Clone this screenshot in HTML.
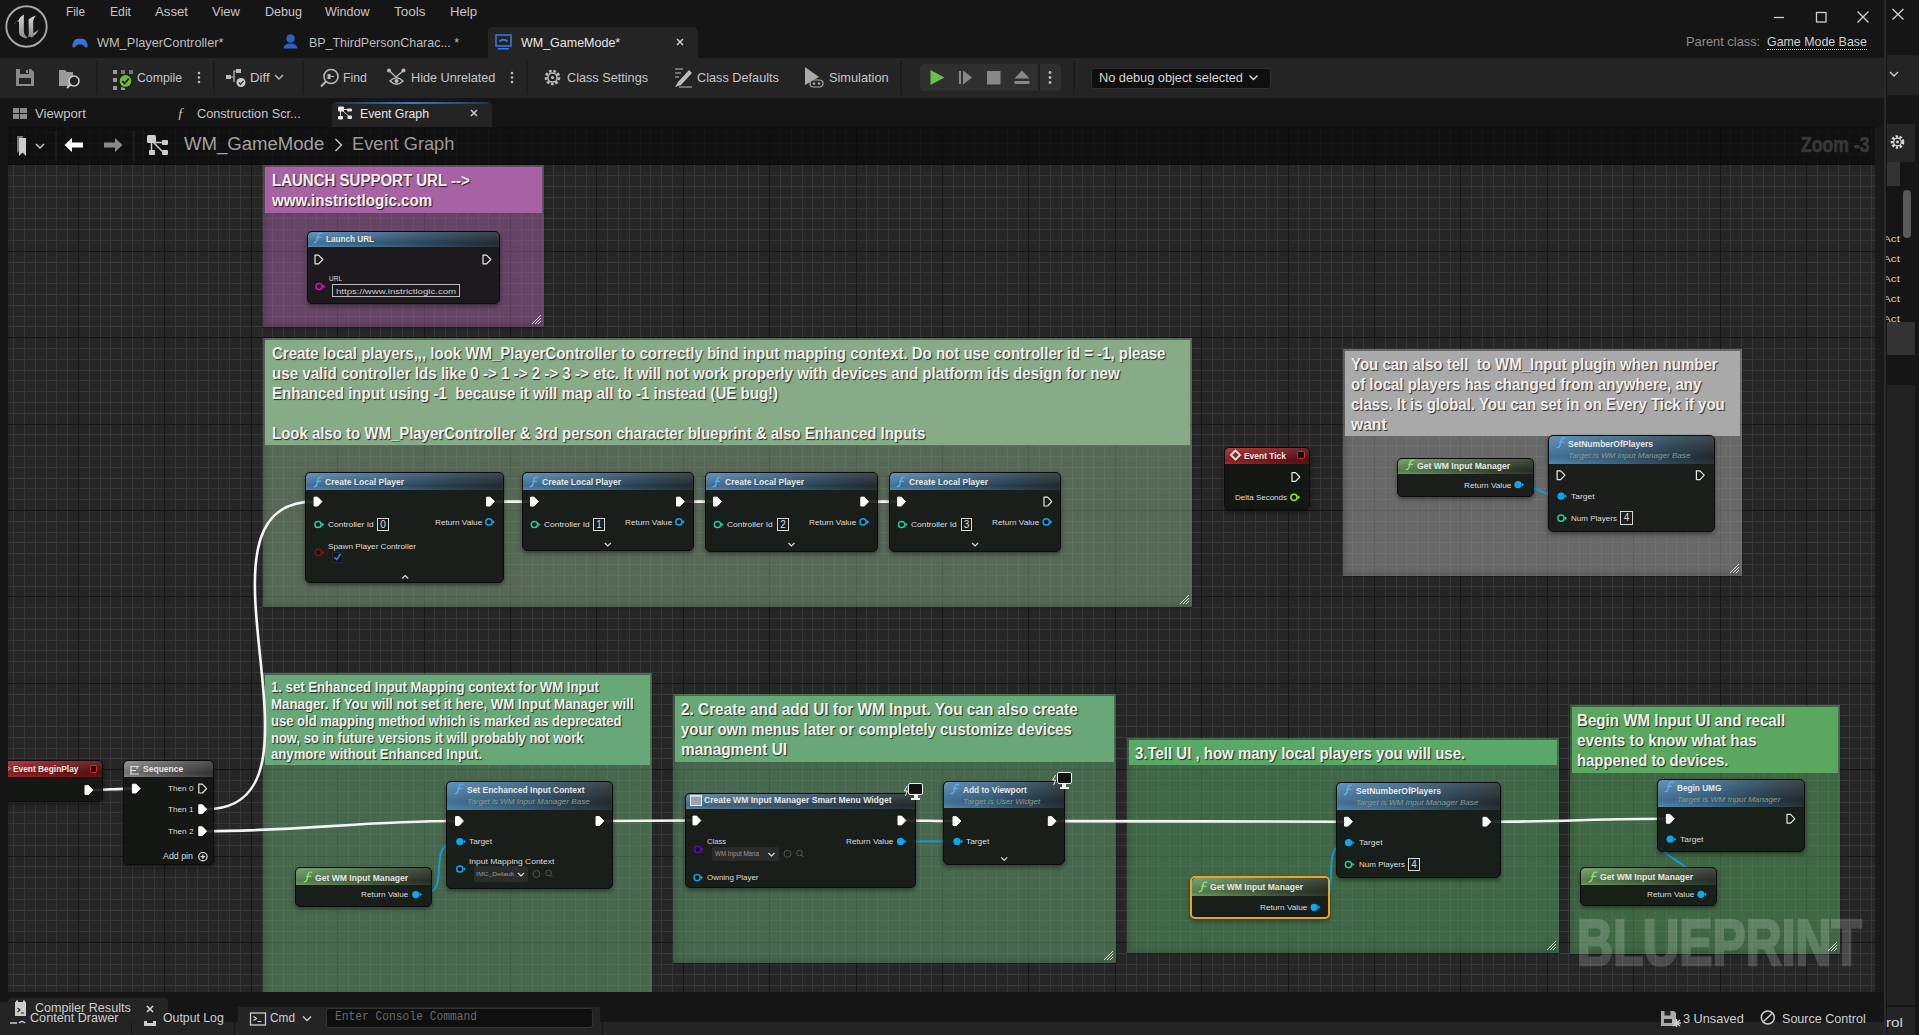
<!DOCTYPE html>
<html><head><meta charset="utf-8"><style>
*{box-sizing:border-box}
body{margin:0;width:1919px;height:1035px;overflow:hidden;background:#151515;font-family:"Liberation Sans",sans-serif;position:relative}
.a{position:absolute}
.t{white-space:pre;transform-origin:0 0}
.ct{text-shadow:1px 1px 1px rgba(0,0,0,.75)}
.cb{box-shadow:inset 5px -5px 6px -3px rgba(0,0,0,.16),0 1px 1px rgba(0,0,0,.35)}
.nd{border-radius:5px;background:rgba(20,22,20,.9);box-shadow:0 2px 4px rgba(0,0,0,.45);overflow:hidden}
.nh{border-radius:4px 4px 0 0}
.vb{border:1px solid #d8d8d8;color:#ddd;text-align:center;font-family:"Liberation Sans",sans-serif}
</style></head><body>
<div class="a" style="left:0;top:58px;width:1884px;height:40px;background:#242424"></div><svg class="a" style="left:0;top:0" width="56" height="56"><defs><linearGradient id="ug" x1="0" y1="0" x2="0" y2="1"><stop offset="0" stop-color="#d8d8d8"/><stop offset="1" stop-color="#8a8a8a"/></linearGradient></defs><circle cx="26.5" cy="26.5" r="20.2" fill="#151515" stroke="#a8a8a8" stroke-width="1.9"/><path d="M14 25Q15.5 20.5 18.5 21.5L19 22V33Q19.5 36.5 26 38.5L27.5 37.5Q24 35 23.8 31.5V18Q23.8 16 24 14.5Q20.5 16 18.6 20.2Q16.5 20.5 14 25Z" fill="url(#ug)"/><path d="M28.5 19.5Q32 16.5 36 15.5Q33.5 18 33.2 21V33Q36 31.5 39 29.5Q36 35 32 37.5L28.8 36.5L27.5 37.5Q29 35.5 28.8 33Z" fill="url(#ug)"/></svg><div class="a t " style="left:66.0px;top:3.70px;font-family:'Liberation Sans',sans-serif;font-size:13px;line-height:15.6px;font-weight:normal;font-style:normal;color:#c6c6c6;transform:scaleX(0.907);">File</div><div class="a t " style="left:110.3px;top:3.70px;font-family:'Liberation Sans',sans-serif;font-size:13px;line-height:15.6px;font-weight:normal;font-style:normal;color:#c6c6c6;transform:scaleX(0.937);">Edit</div><div class="a t " style="left:155.4px;top:3.70px;font-family:'Liberation Sans',sans-serif;font-size:13px;line-height:15.6px;font-weight:normal;font-style:normal;color:#c6c6c6;transform:scaleX(1.015);">Asset</div><div class="a t " style="left:212.0px;top:3.70px;font-family:'Liberation Sans',sans-serif;font-size:13px;line-height:15.6px;font-weight:normal;font-style:normal;color:#c6c6c6;transform:scaleX(1.002);">View</div><div class="a t " style="left:264.5px;top:3.70px;font-family:'Liberation Sans',sans-serif;font-size:13px;line-height:15.6px;font-weight:normal;font-style:normal;color:#c6c6c6;transform:scaleX(0.966);">Debug</div><div class="a t " style="left:325.0px;top:3.70px;font-family:'Liberation Sans',sans-serif;font-size:13px;line-height:15.6px;font-weight:normal;font-style:normal;color:#c6c6c6;transform:scaleX(0.962);">Window</div><div class="a t " style="left:394.0px;top:3.70px;font-family:'Liberation Sans',sans-serif;font-size:13px;line-height:15.6px;font-weight:normal;font-style:normal;color:#c6c6c6;transform:scaleX(1.038);">Tools</div><div class="a t " style="left:449.8px;top:3.70px;font-family:'Liberation Sans',sans-serif;font-size:13px;line-height:15.6px;font-weight:normal;font-style:normal;color:#c6c6c6;transform:scaleX(1.010);">Help</div><div class="a" style="left:488px;top:27px;width:209.5px;height:31px;background:#242424;border-radius:5px 5px 0 0"></div><div class="a t " style="left:97.2px;top:34.70px;font-family:'Liberation Sans',sans-serif;font-size:13px;line-height:15.6px;font-weight:normal;font-style:normal;color:#bdbdbd;transform:scaleX(0.984);">WM_PlayerController*</div><div class="a t " style="left:309.2px;top:34.70px;font-family:'Liberation Sans',sans-serif;font-size:13px;line-height:15.6px;font-weight:normal;font-style:normal;color:#bdbdbd;transform:scaleX(0.957);">BP_ThirdPersonCharac... *</div><div class="a t " style="left:521.0px;top:34.70px;font-family:'Liberation Sans',sans-serif;font-size:13px;line-height:15.6px;font-weight:normal;font-style:normal;color:#e8e8e8;transform:scaleX(0.960);">WM_GameMode*</div><svg class="a" style="left:0;top:0" width="720" height="58"><path d="M75 39.5Q80 37.5 85 39.5Q88 43 87.5 47Q86 48.5 84 46L82 44.5H78L76 46Q74 48.5 72.5 47Q72 43 75 39.5Z" fill="#3b6fd6"/><circle cx="290.5" cy="38.5" r="4.3" fill="#2f5fc8"/><path d="M283.5 48.5Q284 43.5 290.5 43.5Q297 43.5 297.5 48.5Z" fill="#2f5fc8"/><rect x="496" y="35" width="15" height="11" fill="none" stroke="#3b7be0" stroke-width="1.5"/><path d="M499.5 41.5Q503.5 38 507.5 41.5" stroke="#3b7be0" stroke-width="2" fill="none"/><rect x="498" y="48" width="11" height="1.5" fill="#3b7be0"/><path d="M677 39L683 45M683 39L677 45" stroke="#ccc" stroke-width="1.5"/></svg><svg class="a" style="left:1760px;top:0" width="159" height="58"><path d="M14 17.5H24" stroke="#ccc" stroke-width="1.3"/><rect x="56.5" y="12.5" width="9.5" height="9.5" fill="none" stroke="#ccc" stroke-width="1.3"/><path d="M97.5 11.5L108.5 22.5M108.5 11.5L97.5 22.5" stroke="#ccc" stroke-width="1.4"/><path d="M132.5 9L143.5 19.5M143.5 9L132.5 19.5" stroke="#ccc" stroke-width="1.4"/></svg><div class="a t " style="left:1686.3px;top:33.70px;font-family:'Liberation Sans',sans-serif;font-size:13px;line-height:15.6px;font-weight:normal;font-style:normal;color:#8e8e8e;transform:scaleX(0.987);">Parent class:</div><div class="a t " style="left:1767.3px;top:33.70px;font-family:'Liberation Sans',sans-serif;font-size:13px;line-height:15.6px;font-weight:normal;font-style:normal;color:#d0d0d0;transform:scaleX(0.953);">Game Mode Base</div><div class="a" style="left:1767px;top:49px;width:100px;height:0;border-top:1px dotted #ccc"></div><div class="a" style="left:96px;top:61px;width:2px;height:34px;background:#1b1b1b"></div><div class="a" style="left:212.5px;top:61px;width:2px;height:34px;background:#1b1b1b"></div><div class="a" style="left:301.5px;top:61px;width:2px;height:34px;background:#1b1b1b"></div><div class="a" style="left:525.5px;top:61px;width:2px;height:34px;background:#1b1b1b"></div><div class="a" style="left:900px;top:61px;width:2px;height:34px;background:#1b1b1b"></div><div class="a" style="left:1073px;top:61px;width:2px;height:34px;background:#1b1b1b"></div><div class="a t " style="left:137.3px;top:69.70px;font-family:'Liberation Sans',sans-serif;font-size:13px;line-height:15.6px;font-weight:normal;font-style:normal;color:#c4c4c4;transform:scaleX(0.944);">Compile</div><div class="a t " style="left:250.4px;top:69.70px;font-family:'Liberation Sans',sans-serif;font-size:13px;line-height:15.6px;font-weight:normal;font-style:normal;color:#c4c4c4;transform:scaleX(1.023);">Diff</div><div class="a t " style="left:343.3px;top:69.70px;font-family:'Liberation Sans',sans-serif;font-size:13px;line-height:15.6px;font-weight:normal;font-style:normal;color:#c4c4c4;transform:scaleX(0.945);">Find</div><div class="a t " style="left:411.4px;top:69.70px;font-family:'Liberation Sans',sans-serif;font-size:13px;line-height:15.6px;font-weight:normal;font-style:normal;color:#c4c4c4;transform:scaleX(0.973);">Hide Unrelated</div><div class="a t " style="left:567.3px;top:69.70px;font-family:'Liberation Sans',sans-serif;font-size:13px;line-height:15.6px;font-weight:normal;font-style:normal;color:#c4c4c4;transform:scaleX(0.975);">Class Settings</div><div class="a t " style="left:697.4px;top:69.70px;font-family:'Liberation Sans',sans-serif;font-size:13px;line-height:15.6px;font-weight:normal;font-style:normal;color:#c4c4c4;transform:scaleX(0.978);">Class Defaults</div><div class="a t " style="left:828.5px;top:69.70px;font-family:'Liberation Sans',sans-serif;font-size:13px;line-height:15.6px;font-weight:normal;font-style:normal;color:#c4c4c4;transform:scaleX(0.982);">Simulation</div><div class="a" style="left:920px;top:63.7px;width:141px;height:27.8px;background:#2f2f2f;border-radius:4px"></div><div class="a" style="left:1038px;top:63.7px;width:1.5px;height:27.8px;background:#1e1e1e"></div><div class="a" style="left:1091.4px;top:67.8px;width:179.2px;height:21px;background:#0f0f0f;border:1px solid #303030;border-radius:3px"></div><div class="a t " style="left:1098.8px;top:69.70px;font-family:'Liberation Sans',sans-serif;font-size:13px;line-height:15.6px;font-weight:normal;font-style:normal;color:#d4d4d4;transform:scaleX(0.981);">No debug object selected</div><svg class="a" style="left:0;top:58px" width="1919" height="40"><path d="M16 11H31L34 14V28H16Z" fill="#8a8a8a"/><rect x="19" y="20" width="12" height="6" fill="#242424"/><rect x="20" y="11" width="9" height="5" fill="#242424"/><rect x="26" y="12" width="2" height="3" fill="#8a8a8a"/><path d="M59 12H65L67 14H73V28H59Z" fill="#9a9a9a"/><circle cx="74" cy="23" r="5" fill="#242424" stroke="#ccc" stroke-width="1.6"/><path d="M70.5 26.5L67 30" stroke="#ccc" stroke-width="1.8"/><rect x="113" y="12" width="4" height="4" fill="#999"/><rect x="121" y="12" width="4" height="4" fill="#777"/><rect x="129" y="12" width="4" height="4" fill="#777"/><rect x="113" y="20" width="4" height="4" fill="#999"/><rect x="113" y="28" width="4" height="4" fill="#999"/><rect x="121" y="28" width="4" height="4" fill="#999"/><circle cx="125.5" cy="23" r="6.5" fill="#6cbf2a" stroke="#1a1a1a" stroke-width="1.2"/><path d="M122.3 23L124.7 25.5L128.8 20.5" fill="none" stroke="#111" stroke-width="1.8"/><circle cx="199" cy="15" r="1.3" fill="#bbb"/><circle cx="199" cy="19.5" r="1.3" fill="#bbb"/><circle cx="199" cy="24" r="1.3" fill="#bbb"/><rect x="226" y="17" width="5" height="4" fill="#bbb"/><rect x="236" y="11" width="5" height="4" fill="#bbb"/><path d="M231 19H234V13H236M234 19V24" stroke="#bbb" fill="none" stroke-width="1.2"/><circle cx="241" cy="24.5" r="4.5" fill="#ccc"/><path d="M238.8 24.5L240.5 26.3L243.5 22.8" stroke="#242424" fill="none" stroke-width="1.3"/><path d="M275 17L279 21L283 17" stroke="#bbb" fill="none" stroke-width="1.4"/><circle cx="331" cy="18.5" r="7" fill="none" stroke="#bbb" stroke-width="1.6"/><path d="M326 23.5L321 28.5" stroke="#bbb" stroke-width="2"/><rect x="327.5" y="16" width="3" height="5" fill="#bbb"/><path d="M330.5 18.5H334" stroke="#bbb"/><circle cx="389" cy="12.5" r="2" fill="#bbb"/><circle cx="403.5" cy="12.5" r="2" fill="#bbb"/><path d="M389 12.5L396 19M403.5 12.5L396 19" stroke="#bbb" stroke-width="1.2"/><path d="M390 23Q396.5 16.5 403 23Q396.5 29.5 390 23Z" fill="none" stroke="#bbb" stroke-width="1.4"/><circle cx="396.5" cy="23" r="2" fill="#bbb"/><circle cx="512" cy="15" r="1.3" fill="#bbb"/><circle cx="512" cy="19.5" r="1.3" fill="#bbb"/><circle cx="512" cy="24" r="1.3" fill="#bbb"/><circle cx="552.5" cy="19.5" r="6.5" fill="none" stroke="#bbb" stroke-width="2.6" stroke-dasharray="2.6 1.8"/><circle cx="552.5" cy="19.5" r="4.6" fill="none" stroke="#bbb" stroke-width="1.5"/><circle cx="552.5" cy="19.5" r="1.6" fill="#bbb"/><path d="M675 11H683M675 15H681M675 19H679M679 29H692M684 29H692" stroke="#bbb" stroke-width="1.2"/><path d="M675 29L678 24L689 12L692 15L681 27Z" fill="#bbb"/><path d="M805 9L819 19L805 27Z" fill="#aaa"/><rect x="810" y="22" width="13" height="7" rx="3.5" fill="#242424" stroke="#aaa" stroke-width="1.2"/><circle cx="814" cy="25.5" r="1.3" fill="#aaa"/><circle cx="819" cy="25.5" r="1.3" fill="#aaa"/><path d="M930.5 12L944.5 19.5L930.5 27Z" fill="#6cc04a"/><rect x="959" y="13" width="2" height="13" fill="#888"/><path d="M963 12.5L972 19.5L963 26.5Z" fill="#888"/><rect x="987" y="13" width="13.5" height="13.5" fill="#888"/><path d="M1014.5 20.5L1022 12.5L1029.5 20.5Z" fill="#888"/><rect x="1014.5" y="23" width="15" height="3" fill="#888"/><circle cx="1050" cy="14.5" r="1.4" fill="#bbb"/><circle cx="1050" cy="19.5" r="1.4" fill="#bbb"/><circle cx="1050" cy="24.5" r="1.4" fill="#bbb"/><path d="M1249.5 17.5L1253.5 21.5L1257.5 17.5" stroke="#ddd" fill="none" stroke-width="1.4"/></svg><div class="a" style="left:332.2px;top:102.3px;width:159.8px;height:24.7px;background:#242424;border-radius:4px 4px 0 0"></div><div class="a" style="left:336px;top:102.3px;width:152px;height:1.5px;background:linear-gradient(to right,rgba(40,120,220,.2),#2a7fd8,rgba(40,120,220,.2))"></div><div class="a t " style="left:35.2px;top:106.10px;font-family:'Liberation Sans',sans-serif;font-size:13px;line-height:15.6px;font-weight:normal;font-style:normal;color:#c4c4c4;transform:scaleX(1.009);">Viewport</div><div class="a t " style="left:197.2px;top:106.10px;font-family:'Liberation Sans',sans-serif;font-size:13px;line-height:15.6px;font-weight:normal;font-style:normal;color:#c4c4c4;transform:scaleX(0.976);">Construction Scr...</div><div class="a t " style="left:359.6px;top:106.10px;font-family:'Liberation Sans',sans-serif;font-size:13px;line-height:15.6px;font-weight:normal;font-style:normal;color:#e8e8e8;transform:scaleX(0.945);">Event Graph</div><div class="a" style="left:177px;top:104px;font:italic 15px/18px 'Liberation Serif',serif;color:#bbb">&#402;</div><svg class="a" style="left:0;top:98px" width="500" height="30"><rect x="13" y="10" width="6" height="5" fill="#8a8a8a"/><rect x="20" y="10" width="7" height="5" fill="#8a8a8a"/><rect x="13" y="16" width="6" height="5" fill="#8a8a8a"/><rect x="20" y="16" width="7" height="5" fill="#8a8a8a"/><rect x="338" y="8.5" width="6" height="5" rx="1" fill="#e8e8e8"/><rect x="347" y="10.5" width="5" height="3" rx="1" fill="#e8e8e8"/><rect x="338" y="18" width="5" height="3.5" rx="1" fill="#e8e8e8"/><rect x="347.5" y="17.5" width="4.5" height="3.5" rx="1" fill="#e8e8e8"/><path d="M344 11.5H347.5M340.5 13V18M342.5 12.5L348.5 18" stroke="#e8e8e8" stroke-width="0.9"/><path d="M471 12L477 18M477 12L471 18" stroke="#ccc" stroke-width="1.5"/></svg>
<svg id="grid" width="1919" height="1035" style="position:absolute;left:0;top:0"><rect x="8" y="127" width="1867" height="865" fill="#262626"/><path d="M13.5 127V992M24.5 127V992M35.5 127V992M46.5 127V992M56.5 127V992M67.5 127V992M89.5 127V992M100.5 127V992M110.5 127V992M121.5 127V992M132.5 127V992M143.5 127V992M154.5 127V992M175.5 127V992M186.5 127V992M197.5 127V992M208.5 127V992M218.5 127V992M229.5 127V992M240.5 127V992M262.5 127V992M272.5 127V992M283.5 127V992M294.5 127V992M305.5 127V992M316.5 127V992M326.5 127V992M348.5 127V992M359.5 127V992M370.5 127V992M380.5 127V992M391.5 127V992M402.5 127V992M413.5 127V992M434.5 127V992M445.5 127V992M456.5 127V992M467.5 127V992M478.5 127V992M488.5 127V992M499.5 127V992M521.5 127V992M532.5 127V992M542.5 127V992M553.5 127V992M564.5 127V992M575.5 127V992M586.5 127V992M607.5 127V992M618.5 127V992M629.5 127V992M640.5 127V992M650.5 127V992M661.5 127V992M672.5 127V992M694.5 127V992M704.5 127V992M715.5 127V992M726.5 127V992M737.5 127V992M748.5 127V992M758.5 127V992M780.5 127V992M791.5 127V992M802.5 127V992M812.5 127V992M823.5 127V992M834.5 127V992M845.5 127V992M866.5 127V992M877.5 127V992M888.5 127V992M899.5 127V992M910.5 127V992M920.5 127V992M931.5 127V992M953.5 127V992M964.5 127V992M974.5 127V992M985.5 127V992M996.5 127V992M1007.5 127V992M1018.5 127V992M1039.5 127V992M1050.5 127V992M1061.5 127V992M1072.5 127V992M1082.5 127V992M1093.5 127V992M1104.5 127V992M1126.5 127V992M1136.5 127V992M1147.5 127V992M1158.5 127V992M1169.5 127V992M1180.5 127V992M1190.5 127V992M1212.5 127V992M1223.5 127V992M1234.5 127V992M1244.5 127V992M1255.5 127V992M1266.5 127V992M1277.5 127V992M1298.5 127V992M1309.5 127V992M1320.5 127V992M1331.5 127V992M1342.5 127V992M1352.5 127V992M1363.5 127V992M1385.5 127V992M1396.5 127V992M1406.5 127V992M1417.5 127V992M1428.5 127V992M1439.5 127V992M1450.5 127V992M1471.5 127V992M1482.5 127V992M1493.5 127V992M1504.5 127V992M1514.5 127V992M1525.5 127V992M1536.5 127V992M1558.5 127V992M1568.5 127V992M1579.5 127V992M1590.5 127V992M1601.5 127V992M1612.5 127V992M1622.5 127V992M1644.5 127V992M1655.5 127V992M1666.5 127V992M1676.5 127V992M1687.5 127V992M1698.5 127V992M1709.5 127V992M1730.5 127V992M1741.5 127V992M1752.5 127V992M1763.5 127V992M1774.5 127V992M1784.5 127V992M1795.5 127V992M1817.5 127V992M1828.5 127V992M1838.5 127V992M1849.5 127V992M1860.5 127V992M1871.5 127V992M8 132.5H1875M8 143.5H1875M8 154.5H1875M8 175.5H1875M8 186.5H1875M8 197.5H1875M8 208.5H1875M8 218.5H1875M8 229.5H1875M8 240.5H1875M8 262.5H1875M8 272.5H1875M8 283.5H1875M8 294.5H1875M8 305.5H1875M8 316.5H1875M8 326.5H1875M8 348.5H1875M8 359.5H1875M8 370.5H1875M8 380.5H1875M8 391.5H1875M8 402.5H1875M8 413.5H1875M8 434.5H1875M8 445.5H1875M8 456.5H1875M8 467.5H1875M8 478.5H1875M8 488.5H1875M8 499.5H1875M8 521.5H1875M8 532.5H1875M8 542.5H1875M8 553.5H1875M8 564.5H1875M8 575.5H1875M8 586.5H1875M8 607.5H1875M8 618.5H1875M8 629.5H1875M8 640.5H1875M8 650.5H1875M8 661.5H1875M8 672.5H1875M8 694.5H1875M8 704.5H1875M8 715.5H1875M8 726.5H1875M8 737.5H1875M8 748.5H1875M8 758.5H1875M8 780.5H1875M8 791.5H1875M8 802.5H1875M8 812.5H1875M8 823.5H1875M8 834.5H1875M8 845.5H1875M8 866.5H1875M8 877.5H1875M8 888.5H1875M8 899.5H1875M8 910.5H1875M8 920.5H1875M8 931.5H1875M8 953.5H1875M8 964.5H1875M8 974.5H1875M8 985.5H1875" stroke="#373737" stroke-width="1"/><path d="M78.5 127V992M164.5 127V992M251.5 127V992M337.5 127V992M424.5 127V992M510.5 127V992M596.5 127V992M683.5 127V992M769.5 127V992M856.5 127V992M942.5 127V992M1028.5 127V992M1115.5 127V992M1201.5 127V992M1288.5 127V992M1374.5 127V992M1460.5 127V992M1547.5 127V992M1633.5 127V992M1720.5 127V992M1806.5 127V992M8 164.5H1875M8 251.5H1875M8 337.5H1875M8 424.5H1875M8 510.5H1875M8 596.5H1875M8 683.5H1875M8 769.5H1875M8 856.5H1875M8 942.5H1875" stroke="#171717" stroke-width="1"/></svg>
<div class="a" style="left:8px;top:127px;width:1867px;height:865px;overflow:hidden">
<div class="a" style="left:-8px;top:-127px;width:1919px;height:1035px">
<div class="a cb" style="left:263px;top:164.5px;width:281px;height:162.5px;background:rgba(166,98,163,0.5)"></div><div class="a" style="left:265px;top:166.5px;width:277px;height:46.5px;background:#a662a3"></div><svg class="a" style="left:530px;top:313px" width="12" height="12"><path d="M11 2L2 11M11 5L5 11M11 8L8 11" stroke="#ddd" stroke-width="1"/></svg><div class="a cb" style="left:263px;top:338px;width:929px;height:269px;background:rgba(136,170,136,0.5)"></div><div class="a" style="left:265px;top:340px;width:925px;height:105px;background:#87ab87"></div><svg class="a" style="left:1178px;top:593px" width="12" height="12"><path d="M11 2L2 11M11 5L5 11M11 8L8 11" stroke="#ddd" stroke-width="1"/></svg><div class="a cb" style="left:1343px;top:349px;width:399px;height:227px;background:rgba(169,169,169,0.5)"></div><div class="a" style="left:1345px;top:351px;width:395px;height:85px;background:#a9a9a9"></div><svg class="a" style="left:1728px;top:562px" width="12" height="12"><path d="M11 2L2 11M11 5L5 11M11 8L8 11" stroke="#ddd" stroke-width="1"/></svg><div class="a cb" style="left:263px;top:673px;width:389px;height:339px;background:rgba(104,168,120,0.5)"></div><div class="a" style="left:265px;top:675px;width:385px;height:90px;background:#68a878"></div><svg class="a" style="left:638px;top:998px" width="12" height="12"><path d="M11 2L2 11M11 5L5 11M11 8L8 11" stroke="#ddd" stroke-width="1"/></svg><div class="a cb" style="left:673px;top:694px;width:443px;height:269px;background:rgba(104,168,120,0.5)"></div><div class="a" style="left:675px;top:696px;width:439px;height:66px;background:#68a878"></div><svg class="a" style="left:1102px;top:949px" width="12" height="12"><path d="M11 2L2 11M11 5L5 11M11 8L8 11" stroke="#ddd" stroke-width="1"/></svg><div class="a cb" style="left:1127px;top:738px;width:432px;height:215px;background:rgba(90,168,104,0.5)"></div><div class="a" style="left:1129px;top:740px;width:428px;height:25px;background:#5aa868"></div><svg class="a" style="left:1545px;top:939px" width="12" height="12"><path d="M11 2L2 11M11 5L5 11M11 8L8 11" stroke="#ddd" stroke-width="1"/></svg><div class="a cb" style="left:1570px;top:705px;width:270px;height:249px;background:rgba(90,168,96,0.5)"></div><div class="a" style="left:1572px;top:707px;width:266px;height:66px;background:#5aa860"></div><svg class="a" style="left:1826px;top:940px" width="12" height="12"><path d="M11 2L2 11M11 5L5 11M11 8L8 11" stroke="#ddd" stroke-width="1"/></svg><div class="a t ct" style="left:271.6px;top:170.86px;font-family:'Liberation Sans',sans-serif;font-size:16px;line-height:19.2px;font-weight:bold;font-style:normal;color:#f0f0f0;transform:scaleX(0.938);">LAUNCH SUPPORT URL --&gt;</div><div class="a t ct" style="left:271.6px;top:190.56px;font-family:'Liberation Sans',sans-serif;font-size:16px;line-height:19.2px;font-weight:bold;font-style:normal;color:#f0f0f0;transform:scaleX(0.947);">www.instrictlogic.com</div><div class="a t ct" style="left:271.8px;top:343.86px;font-family:'Liberation Sans',sans-serif;font-size:16px;line-height:19.2px;font-weight:bold;font-style:normal;color:#f0f0f0;transform:scaleX(0.937);">Create local players,,, look WM_PlayerController to correctly bind input mapping context. Do not use controller id = -1, please</div><div class="a t ct" style="left:271.8px;top:363.86px;font-family:'Liberation Sans',sans-serif;font-size:16px;line-height:19.2px;font-weight:bold;font-style:normal;color:#f0f0f0;transform:scaleX(0.945);">use valid controller Ids like 0 -&gt; 1 -&gt; 2 -&gt; 3 -&gt; etc. It will not work properly with devices and platform ids design for new</div><div class="a t ct" style="left:271.8px;top:383.86px;font-family:'Liberation Sans',sans-serif;font-size:16px;line-height:19.2px;font-weight:bold;font-style:normal;color:#f0f0f0;transform:scaleX(0.941);">Enhanced input using -1  because it will map all to -1 instead (UE bug!)</div><div class="a t ct" style="left:271.8px;top:423.86px;font-family:'Liberation Sans',sans-serif;font-size:16px;line-height:19.2px;font-weight:bold;font-style:normal;color:#f0f0f0;transform:scaleX(0.935);">Look also to WM_PlayerController &amp; 3rd person character blueprint &amp; also Enhanced Inputs</div><div class="a t ct" style="left:1351.3px;top:354.86px;font-family:'Liberation Sans',sans-serif;font-size:16px;line-height:19.2px;font-weight:bold;font-style:normal;color:#f0f0f0;transform:scaleX(0.938);">You can also tell  to WM_Input plugin when number</div><div class="a t ct" style="left:1351.3px;top:374.86px;font-family:'Liberation Sans',sans-serif;font-size:16px;line-height:19.2px;font-weight:bold;font-style:normal;color:#f0f0f0;transform:scaleX(0.938);">of local players has changed from anywhere, any</div><div class="a t ct" style="left:1351.3px;top:394.86px;font-family:'Liberation Sans',sans-serif;font-size:16px;line-height:19.2px;font-weight:bold;font-style:normal;color:#f0f0f0;transform:scaleX(0.936);">class. It is global. You can set in on Every Tick if you</div><div class="a t ct" style="left:1351.3px;top:414.86px;font-family:'Liberation Sans',sans-serif;font-size:16px;line-height:19.2px;font-weight:bold;font-style:normal;color:#f0f0f0;transform:scaleX(0.977);">want</div><div class="a t ct" style="left:271.3px;top:678.75px;font-family:'Liberation Sans',sans-serif;font-size:14px;line-height:16.8px;font-weight:bold;font-style:normal;color:#f0f0f0;transform:scaleX(0.939);">1. set Enhanced Input Mapping context for WM Input</div><div class="a t ct" style="left:271.3px;top:695.75px;font-family:'Liberation Sans',sans-serif;font-size:14px;line-height:16.8px;font-weight:bold;font-style:normal;color:#f0f0f0;transform:scaleX(0.947);">Manager. If You will not set it here, WM Input Manager will</div><div class="a t ct" style="left:271.3px;top:712.75px;font-family:'Liberation Sans',sans-serif;font-size:14px;line-height:16.8px;font-weight:bold;font-style:normal;color:#f0f0f0;transform:scaleX(0.931);">use old mapping method which is marked as deprecated</div><div class="a t ct" style="left:271.3px;top:729.75px;font-family:'Liberation Sans',sans-serif;font-size:14px;line-height:16.8px;font-weight:bold;font-style:normal;color:#f0f0f0;transform:scaleX(0.927);">now, so in future versions it will probably not work</div><div class="a t ct" style="left:271.3px;top:745.75px;font-family:'Liberation Sans',sans-serif;font-size:14px;line-height:16.8px;font-weight:bold;font-style:normal;color:#f0f0f0;transform:scaleX(0.939);">anymore without Enhanced Input.</div><div class="a t ct" style="left:681.3px;top:700.26px;font-family:'Liberation Sans',sans-serif;font-size:16px;line-height:19.2px;font-weight:bold;font-style:normal;color:#f0f0f0;transform:scaleX(0.959);">2. Create and add UI for WM Input. You can also create</div><div class="a t ct" style="left:681.3px;top:719.86px;font-family:'Liberation Sans',sans-serif;font-size:16px;line-height:19.2px;font-weight:bold;font-style:normal;color:#f0f0f0;transform:scaleX(0.931);">your own menus later or completely customize devices</div><div class="a t ct" style="left:681.3px;top:739.66px;font-family:'Liberation Sans',sans-serif;font-size:16px;line-height:19.2px;font-weight:bold;font-style:normal;color:#f0f0f0;transform:scaleX(0.962);">managment UI</div><div class="a t ct" style="left:1135.3px;top:743.56px;font-family:'Liberation Sans',sans-serif;font-size:16px;line-height:19.2px;font-weight:bold;font-style:normal;color:#f0f0f0;transform:scaleX(0.936);">3.Tell UI , how many local players you will use.</div><div class="a t ct" style="left:1577.3px;top:710.86px;font-family:'Liberation Sans',sans-serif;font-size:16px;line-height:19.2px;font-weight:bold;font-style:normal;color:#f0f0f0;transform:scaleX(0.944);">Begin WM Input UI and recall</div><div class="a t ct" style="left:1577.3px;top:730.86px;font-family:'Liberation Sans',sans-serif;font-size:16px;line-height:19.2px;font-weight:bold;font-style:normal;color:#f0f0f0;transform:scaleX(0.953);">events to know what has</div><div class="a t ct" style="left:1577.3px;top:750.66px;font-family:'Liberation Sans',sans-serif;font-size:16px;line-height:19.2px;font-weight:bold;font-style:normal;color:#f0f0f0;transform:scaleX(0.930);">happened to devices.</div><svg class="a" style="left:0;top:0" width="1919" height="1035"><path d="M92.0 790.0C107.0 790.0 117.0 788.6 132.0 788.6M206.0 809.2C346.0 809.2 174.0 501.6 314.0 501.6M206.0 831.2C296.0 831.2 366.0 821.0 456.0 821.0M496.0 501.6C506.0 501.6 520.0 501.6 530.0 501.6M685.0 501.6C695.0 501.6 703.6 501.6 713.6 501.6M869.0 501.6C879.0 501.6 887.7 501.6 897.7 501.6M604.0 821.0C634.0 821.0 663.0 820.5 693.0 820.5M906.0 820.5C921.0 820.5 938.0 821.1 953.0 821.1M1056.0 821.1C1156.0 821.1 1245.0 821.7 1345.0 821.7M1493.0 821.7C1553.0 821.7 1606.4 818.8 1666.4 818.8" fill="none" stroke="#f4f4f4" stroke-width="2.6"/><path d="M418.0 895.6C458.0 895.6 420.0 841.6 460.0 841.6M1518.0 484.7C1538.0 484.7 1541.0 496.2 1561.0 496.2M900.5 841.4C910.5 841.4 947.0 841.4 957.0 841.4M1313.2 906.4C1348.2 906.4 1313.8 842.7 1348.8 842.7M1702.3 895.2C1757.3 895.2 1615.2 839.2 1670.2 839.2" fill="none" stroke="#0aa0e8" stroke-width="1.8"/></svg><div class="a nd" style="left:306.6px;top:230.5px;width:193.1px;height:73.8px;border:1px solid #0c0c0c;"><div class="a nh" style="left:0;top:0;right:0;height:15.3px;background:linear-gradient(to bottom,rgba(255,255,255,.10),rgba(0,0,0,.18) 75%,rgba(0,0,0,0)),linear-gradient(to right,#5288b3 0%,#3f6d90 35%,#2c4658 75%,#2a3238 100%)"></div></div><svg class="a" style="left:312.5px;top:231.0px" width="12" height="14"><path d="M1.2 11.6Q3.6 12 4.3 8L5.2 4Q5.9 1.6 8.8 2.4M3.6 6.3H7.6" fill="none" stroke="#5cb0f0" stroke-width="1.3" stroke-linecap="round"/></svg><div class="a t " style="left:326.3px;top:233.01px;font-family:'Liberation Sans',sans-serif;font-size:9.5px;line-height:11.4px;font-weight:bold;font-style:normal;color:#e6e6e6;transform:scaleX(0.860);">Launch URL</div><div class="a t " style="left:329.0px;top:275.37px;font-family:'Liberation Sans',sans-serif;font-size:7px;line-height:8.4px;font-weight:normal;font-style:normal;color:#dcdcdc;transform:scaleX(0.928);">URL</div><div class="a" style="left:332px;top:284px;width:128px;height:13px;border:1px solid #bbb"></div><div class="a t " style="left:336.0px;top:286.93px;font-family:'Liberation Sans',sans-serif;font-size:8px;line-height:9.6px;font-weight:normal;font-style:normal;color:#d0d0d0;transform:scaleX(1.200);">https://www.instrictlogic.com</div><div class="a nd" style="left:305.1px;top:472.3px;width:198.5px;height:111.1px;border:1px solid #0c0c0c;"><div class="a nh" style="left:0;top:0;right:0;height:16.4px;background:linear-gradient(to bottom,rgba(255,255,255,.10),rgba(0,0,0,.18) 75%,rgba(0,0,0,0)),linear-gradient(to right,#5288b3 0%,#3f6d90 35%,#2c4658 75%,#2a3238 100%)"></div></div><svg class="a" style="left:312.6px;top:474.5px" width="12" height="14"><path d="M1.2 11.6Q3.6 12 4.3 8L5.2 4Q5.9 1.6 8.8 2.4M3.6 6.3H7.6" fill="none" stroke="#5cb0f0" stroke-width="1.3" stroke-linecap="round"/></svg><div class="a t " style="left:325.1px;top:476.01px;font-family:'Liberation Sans',sans-serif;font-size:9.5px;line-height:11.4px;font-weight:bold;font-style:normal;color:#e6e6e6;transform:scaleX(0.896);">Create Local Player</div><div class="a t " style="left:327.7px;top:519.90px;font-family:'Liberation Sans',sans-serif;font-size:7.5px;line-height:9.0px;font-weight:normal;font-style:normal;color:#dcdcdc;transform:scaleX(1.119);">Controller Id</div><div class="a vb" style="left:377.1px;top:518.1px;width:11.9px;height:12.5px;font-size:10px;line-height:11.0px">0</div><div class="a t " style="left:434.6px;top:518.30px;font-family:'Liberation Sans',sans-serif;font-size:7.5px;line-height:9.0px;font-weight:normal;font-style:normal;color:#dcdcdc;transform:scaleX(1.092);">Return Value</div><div class="a t " style="left:328.0px;top:541.90px;font-family:'Liberation Sans',sans-serif;font-size:7.5px;line-height:9.0px;font-weight:normal;font-style:normal;color:#dcdcdc;transform:scaleX(1.088);">Spawn Player Controller</div><div class="a" style="left:331.6px;top:551.7px;width:11px;height:11px;background:#141414;border:1px solid #2a2a2a"></div><div class="a nd" style="left:521.5px;top:472.3px;width:172.0px;height:79.0px;border:1px solid #0c0c0c;"><div class="a nh" style="left:0;top:0;right:0;height:16.4px;background:linear-gradient(to bottom,rgba(255,255,255,.10),rgba(0,0,0,.18) 75%,rgba(0,0,0,0)),linear-gradient(to right,#5288b3 0%,#3f6d90 35%,#2c4658 75%,#2a3238 100%)"></div></div><svg class="a" style="left:529.0px;top:474.5px" width="12" height="14"><path d="M1.2 11.6Q3.6 12 4.3 8L5.2 4Q5.9 1.6 8.8 2.4M3.6 6.3H7.6" fill="none" stroke="#5cb0f0" stroke-width="1.3" stroke-linecap="round"/></svg><div class="a t " style="left:541.5px;top:476.01px;font-family:'Liberation Sans',sans-serif;font-size:9.5px;line-height:11.4px;font-weight:bold;font-style:normal;color:#e6e6e6;transform:scaleX(0.896);">Create Local Player</div><div class="a t " style="left:544.1px;top:519.90px;font-family:'Liberation Sans',sans-serif;font-size:7.5px;line-height:9.0px;font-weight:normal;font-style:normal;color:#dcdcdc;transform:scaleX(1.119);">Controller Id</div><div class="a vb" style="left:593.3px;top:518.1px;width:11.4px;height:12.5px;font-size:10px;line-height:11.0px">1</div><div class="a t " style="left:624.5px;top:518.30px;font-family:'Liberation Sans',sans-serif;font-size:7.5px;line-height:9.0px;font-weight:normal;font-style:normal;color:#dcdcdc;transform:scaleX(1.092);">Return Value</div><div class="a nd" style="left:704.6px;top:472.3px;width:173.2px;height:79.5px;border:1px solid #0c0c0c;"><div class="a nh" style="left:0;top:0;right:0;height:16.4px;background:linear-gradient(to bottom,rgba(255,255,255,.10),rgba(0,0,0,.18) 75%,rgba(0,0,0,0)),linear-gradient(to right,#5288b3 0%,#3f6d90 35%,#2c4658 75%,#2a3238 100%)"></div></div><svg class="a" style="left:712.1px;top:474.5px" width="12" height="14"><path d="M1.2 11.6Q3.6 12 4.3 8L5.2 4Q5.9 1.6 8.8 2.4M3.6 6.3H7.6" fill="none" stroke="#5cb0f0" stroke-width="1.3" stroke-linecap="round"/></svg><div class="a t " style="left:724.6px;top:476.01px;font-family:'Liberation Sans',sans-serif;font-size:9.5px;line-height:11.4px;font-weight:bold;font-style:normal;color:#e6e6e6;transform:scaleX(0.896);">Create Local Player</div><div class="a t " style="left:727.2px;top:519.90px;font-family:'Liberation Sans',sans-serif;font-size:7.5px;line-height:9.0px;font-weight:normal;font-style:normal;color:#dcdcdc;transform:scaleX(1.119);">Controller Id</div><div class="a vb" style="left:777.2px;top:518.1px;width:11.8px;height:12.5px;font-size:10px;line-height:11.0px">2</div><div class="a t " style="left:808.8px;top:518.30px;font-family:'Liberation Sans',sans-serif;font-size:7.5px;line-height:9.0px;font-weight:normal;font-style:normal;color:#dcdcdc;transform:scaleX(1.092);">Return Value</div><div class="a nd" style="left:888.7px;top:472.3px;width:172.3px;height:79.5px;border:1px solid #0c0c0c;"><div class="a nh" style="left:0;top:0;right:0;height:16.4px;background:linear-gradient(to bottom,rgba(255,255,255,.10),rgba(0,0,0,.18) 75%,rgba(0,0,0,0)),linear-gradient(to right,#5288b3 0%,#3f6d90 35%,#2c4658 75%,#2a3238 100%)"></div></div><svg class="a" style="left:896.2px;top:474.5px" width="12" height="14"><path d="M1.2 11.6Q3.6 12 4.3 8L5.2 4Q5.9 1.6 8.8 2.4M3.6 6.3H7.6" fill="none" stroke="#5cb0f0" stroke-width="1.3" stroke-linecap="round"/></svg><div class="a t " style="left:908.7px;top:476.01px;font-family:'Liberation Sans',sans-serif;font-size:9.5px;line-height:11.4px;font-weight:bold;font-style:normal;color:#e6e6e6;transform:scaleX(0.896);">Create Local Player</div><div class="a t " style="left:911.3px;top:519.90px;font-family:'Liberation Sans',sans-serif;font-size:7.5px;line-height:9.0px;font-weight:normal;font-style:normal;color:#dcdcdc;transform:scaleX(1.119);">Controller Id</div><div class="a vb" style="left:960.5px;top:518.1px;width:11.9px;height:12.5px;font-size:10px;line-height:11.0px">3</div><div class="a t " style="left:992.0px;top:518.30px;font-family:'Liberation Sans',sans-serif;font-size:7.5px;line-height:9.0px;font-weight:normal;font-style:normal;color:#dcdcdc;transform:scaleX(1.092);">Return Value</div><div class="a nd" style="left:1224.3px;top:446.9px;width:85.4px;height:62.7px;border:1px solid #0c0c0c;"><div class="a nh" style="left:0;top:0;right:0;height:16.3px;background:linear-gradient(to bottom,rgba(255,255,255,.10),rgba(0,0,0,.18) 75%,rgba(0,0,0,0)),linear-gradient(to right,#a82828 0%,#8a1c1c 45%,#5a1414 100%)"></div></div><div class="a t " style="left:1243.8px;top:449.91px;font-family:'Liberation Sans',sans-serif;font-size:9.5px;line-height:11.4px;font-weight:bold;font-style:normal;color:#e6e6e6;transform:scaleX(0.887);">Event Tick</div><div class="a" style="left:1297.2px;top:451.3px;width:8px;height:8px;background:#111;border:1.6px solid #f02020;border-radius:1.5px"></div><div class="a t " style="left:1234.9px;top:492.50px;font-family:'Liberation Sans',sans-serif;font-size:7.5px;line-height:9.0px;font-weight:normal;font-style:normal;color:#dcdcdc;transform:scaleX(1.066);">Delta Seconds</div><div class="a nd" style="left:1397.1px;top:457.5px;width:136.7px;height:39.2px;border:1px solid #0c0c0c;"><div class="a nh" style="left:0;top:0;right:0;height:15.2px;background:linear-gradient(to bottom,rgba(255,255,255,.10),rgba(0,0,0,.18) 75%,rgba(0,0,0,0)),linear-gradient(to right,#6c9a62 0%,#557a4c 35%,#3a4c35 75%,#2f362c 100%)"></div></div><svg class="a" style="left:1404.7px;top:458.2px" width="12" height="14"><path d="M1.2 11.6Q3.6 12 4.3 8L5.2 4Q5.9 1.6 8.8 2.4M3.6 6.3H7.6" fill="none" stroke="#8fe07a" stroke-width="1.3" stroke-linecap="round"/></svg><div class="a t " style="left:1416.9px;top:460.01px;font-family:'Liberation Sans',sans-serif;font-size:9.5px;line-height:11.4px;font-weight:bold;font-style:normal;color:#e6e6e6;transform:scaleX(0.904);">Get WM Input Manager</div><div class="a t " style="left:1463.6px;top:480.50px;font-family:'Liberation Sans',sans-serif;font-size:7.5px;line-height:9.0px;font-weight:normal;font-style:normal;color:#dcdcdc;transform:scaleX(1.094);">Return Value</div><div class="a nd" style="left:295.0px;top:867.4px;width:136.6px;height:39.2px;border:1px solid #0c0c0c;"><div class="a nh" style="left:0;top:0;right:0;height:16.8px;background:linear-gradient(to bottom,rgba(255,255,255,.10),rgba(0,0,0,.18) 75%,rgba(0,0,0,0)),linear-gradient(to right,#6c9a62 0%,#557a4c 35%,#3a4c35 75%,#2f362c 100%)"></div></div><svg class="a" style="left:302.6px;top:869.7px" width="12" height="14"><path d="M1.2 11.6Q3.6 12 4.3 8L5.2 4Q5.9 1.6 8.8 2.4M3.6 6.3H7.6" fill="none" stroke="#8fe07a" stroke-width="1.3" stroke-linecap="round"/></svg><div class="a t " style="left:314.8px;top:871.51px;font-family:'Liberation Sans',sans-serif;font-size:9.5px;line-height:11.4px;font-weight:bold;font-style:normal;color:#e6e6e6;transform:scaleX(0.904);">Get WM Input Manager</div><div class="a t " style="left:361.4px;top:890.40px;font-family:'Liberation Sans',sans-serif;font-size:7.5px;line-height:9.0px;font-weight:normal;font-style:normal;color:#dcdcdc;transform:scaleX(1.094);">Return Value</div><div class="a nd" style="left:1190.4px;top:876.4px;width:139.6px;height:42.9px;border:2px solid #f2a020;"><div class="a nh" style="left:0;top:0;right:0;height:17.6px;background:linear-gradient(to bottom,rgba(255,255,255,.10),rgba(0,0,0,.18) 75%,rgba(0,0,0,0)),linear-gradient(to right,#6c9a62 0%,#557a4c 35%,#3a4c35 75%,#2f362c 100%)"></div></div><svg class="a" style="left:1198.0px;top:879.5px" width="12" height="14"><path d="M1.2 11.6Q3.6 12 4.3 8L5.2 4Q5.9 1.6 8.8 2.4M3.6 6.3H7.6" fill="none" stroke="#8fe07a" stroke-width="1.3" stroke-linecap="round"/></svg><div class="a t " style="left:1210.2px;top:881.31px;font-family:'Liberation Sans',sans-serif;font-size:9.5px;line-height:11.4px;font-weight:bold;font-style:normal;color:#e6e6e6;transform:scaleX(0.904);">Get WM Input Manager</div><div class="a t " style="left:1259.8px;top:903.10px;font-family:'Liberation Sans',sans-serif;font-size:7.5px;line-height:9.0px;font-weight:normal;font-style:normal;color:#dcdcdc;transform:scaleX(1.094);">Return Value</div><div class="a nd" style="left:1580.4px;top:867.4px;width:136.3px;height:38.9px;border:1px solid #0c0c0c;"><div class="a nh" style="left:0;top:0;right:0;height:16.7px;background:linear-gradient(to bottom,rgba(255,255,255,.10),rgba(0,0,0,.18) 75%,rgba(0,0,0,0)),linear-gradient(to right,#6c9a62 0%,#557a4c 35%,#3a4c35 75%,#2f362c 100%)"></div></div><svg class="a" style="left:1588.0px;top:869.6px" width="12" height="14"><path d="M1.2 11.6Q3.6 12 4.3 8L5.2 4Q5.9 1.6 8.8 2.4M3.6 6.3H7.6" fill="none" stroke="#8fe07a" stroke-width="1.3" stroke-linecap="round"/></svg><div class="a t " style="left:1600.2px;top:871.41px;font-family:'Liberation Sans',sans-serif;font-size:9.5px;line-height:11.4px;font-weight:bold;font-style:normal;color:#e6e6e6;transform:scaleX(0.904);">Get WM Input Manager</div><div class="a t " style="left:1646.5px;top:890.10px;font-family:'Liberation Sans',sans-serif;font-size:7.5px;line-height:9.0px;font-weight:normal;font-style:normal;color:#dcdcdc;transform:scaleX(1.094);">Return Value</div><div class="a nd" style="left:1548.1px;top:435.4px;width:166.8px;height:97.1px;border:1px solid #0c0c0c;"><div class="a nh" style="left:0;top:0;right:0;height:27.8px;background:linear-gradient(to bottom,rgba(255,255,255,.10),rgba(0,0,0,.18) 75%,rgba(0,0,0,0)),linear-gradient(to right,#5288b3 0%,#3f6d90 35%,#2c4658 75%,#2a3238 100%)"></div></div><svg class="a" style="left:1555.6px;top:436.4px" width="12" height="14"><path d="M1.2 11.6Q3.6 12 4.3 8L5.2 4Q5.9 1.6 8.8 2.4M3.6 6.3H7.6" fill="none" stroke="#5cb0f0" stroke-width="1.3" stroke-linecap="round"/></svg><div class="a t " style="left:1568.2px;top:438.41px;font-family:'Liberation Sans',sans-serif;font-size:9.5px;line-height:11.4px;font-weight:bold;font-style:normal;color:#e6e6e6;transform:scaleX(0.895);">SetNumberOfPlayers</div><div class="a t " style="left:1568.2px;top:451.30px;font-family:'Liberation Sans',sans-serif;font-size:7.5px;line-height:9.0px;font-weight:normal;font-style:italic;color:#8e9c8c;transform:scaleX(1.078);">Target is WM Input Manager Base</div><div class="a t " style="left:1571.1px;top:491.90px;font-family:'Liberation Sans',sans-serif;font-size:7.5px;line-height:9.0px;font-weight:normal;font-style:normal;color:#dcdcdc;transform:scaleX(1.127);">Target</div><div class="a t " style="left:1571.1px;top:513.70px;font-family:'Liberation Sans',sans-serif;font-size:7.5px;line-height:9.0px;font-weight:normal;font-style:normal;color:#dcdcdc;transform:scaleX(1.069);">Num Players</div><div class="a vb" style="left:1620.3px;top:511.3px;width:12.3px;height:13.5px;font-size:10px;line-height:12.0px">4</div><div class="a nd" style="left:1335.6px;top:781.6px;width:165.9px;height:96.7px;border:1px solid #0c0c0c;"><div class="a nh" style="left:0;top:0;right:0;height:27.5px;background:linear-gradient(to bottom,rgba(255,255,255,.10),rgba(0,0,0,.18) 75%,rgba(0,0,0,0)),linear-gradient(to right,#5288b3 0%,#3f6d90 35%,#2c4658 75%,#2a3238 100%)"></div></div><svg class="a" style="left:1343.1px;top:782.6px" width="12" height="14"><path d="M1.2 11.6Q3.6 12 4.3 8L5.2 4Q5.9 1.6 8.8 2.4M3.6 6.3H7.6" fill="none" stroke="#5cb0f0" stroke-width="1.3" stroke-linecap="round"/></svg><div class="a t " style="left:1355.7px;top:784.61px;font-family:'Liberation Sans',sans-serif;font-size:9.5px;line-height:11.4px;font-weight:bold;font-style:normal;color:#e6e6e6;transform:scaleX(0.895);">SetNumberOfPlayers</div><div class="a t " style="left:1355.7px;top:797.50px;font-family:'Liberation Sans',sans-serif;font-size:7.5px;line-height:9.0px;font-weight:normal;font-style:italic;color:#8e9c8c;transform:scaleX(1.078);">Target is WM Input Manager Base</div><div class="a t " style="left:1358.6px;top:838.40px;font-family:'Liberation Sans',sans-serif;font-size:7.5px;line-height:9.0px;font-weight:normal;font-style:normal;color:#dcdcdc;transform:scaleX(1.127);">Target</div><div class="a t " style="left:1358.6px;top:860.10px;font-family:'Liberation Sans',sans-serif;font-size:7.5px;line-height:9.0px;font-weight:normal;font-style:normal;color:#dcdcdc;transform:scaleX(1.069);">Num Players</div><div class="a vb" style="left:1407.9px;top:857.7px;width:12.3px;height:13.5px;font-size:10px;line-height:12.0px">4</div><div class="a nd" style="left:-2.0px;top:760.4px;width:104.5px;height:41.3px;border:1px solid #0c0c0c;"><div class="a nh" style="left:0;top:0;right:0;height:15.8px;background:linear-gradient(to bottom,rgba(255,255,255,.10),rgba(0,0,0,.18) 75%,rgba(0,0,0,0)),linear-gradient(to right,#a82828 0%,#8a1c1c 45%,#5a1414 100%)"></div></div><div class="a t " style="left:13.0px;top:762.81px;font-family:'Liberation Sans',sans-serif;font-size:9.5px;line-height:11.4px;font-weight:bold;font-style:normal;color:#e6e6e6;transform:scaleX(0.879);">Event BeginPlay</div><div class="a" style="left:89.8px;top:765.2px;width:7.5px;height:7.5px;background:#111;border:1.6px solid #f02020;border-radius:1.5px"></div><div class="a nd" style="left:122.8px;top:760.4px;width:91.1px;height:104.2px;border:1px solid #0c0c0c;"><div class="a nh" style="left:0;top:0;right:0;height:15.8px;background:linear-gradient(to bottom,rgba(255,255,255,.10),rgba(0,0,0,.18) 75%,rgba(0,0,0,0)),linear-gradient(to right,#8a8a8a 0%,#6a6a6a 40%,#3e3e3e 100%)"></div></div><div class="a t " style="left:143.0px;top:763.11px;font-family:'Liberation Sans',sans-serif;font-size:9.5px;line-height:11.4px;font-weight:bold;font-style:normal;color:#e6e6e6;transform:scaleX(0.898);">Sequence</div><div class="a t " style="left:167.8px;top:784.30px;font-family:'Liberation Sans',sans-serif;font-size:7.5px;line-height:9.0px;font-weight:normal;font-style:normal;color:#dcdcdc;transform:scaleX(1.092);">Then 0</div><div class="a t " style="left:167.8px;top:804.90px;font-family:'Liberation Sans',sans-serif;font-size:7.5px;line-height:9.0px;font-weight:normal;font-style:normal;color:#dcdcdc;transform:scaleX(1.092);">Then 1</div><div class="a t " style="left:167.8px;top:826.90px;font-family:'Liberation Sans',sans-serif;font-size:7.5px;line-height:9.0px;font-weight:normal;font-style:normal;color:#dcdcdc;transform:scaleX(1.092);">Then 2</div><div class="a t " style="left:162.7px;top:851.35px;font-family:'Liberation Sans',sans-serif;font-size:8.5px;line-height:10.2px;font-weight:normal;font-style:normal;color:#dcdcdc;transform:scaleX(1.037);">Add pin</div><div class="a nd" style="left:446.4px;top:781.0px;width:166.4px;height:108.4px;border:1px solid #0c0c0c;"><div class="a nh" style="left:0;top:0;right:0;height:27.6px;background:linear-gradient(to bottom,rgba(255,255,255,.10),rgba(0,0,0,.18) 75%,rgba(0,0,0,0)),linear-gradient(to right,#5288b3 0%,#3f6d90 35%,#2c4658 75%,#2a3238 100%)"></div></div><svg class="a" style="left:454.0px;top:781.7px" width="12" height="14"><path d="M1.2 11.6Q3.6 12 4.3 8L5.2 4Q5.9 1.6 8.8 2.4M3.6 6.3H7.6" fill="none" stroke="#5cb0f0" stroke-width="1.3" stroke-linecap="round"/></svg><div class="a t " style="left:467.0px;top:783.71px;font-family:'Liberation Sans',sans-serif;font-size:9.5px;line-height:11.4px;font-weight:bold;font-style:normal;color:#e6e6e6;transform:scaleX(0.891);">Set Enchanced Input Context</div><div class="a t " style="left:467.0px;top:796.60px;font-family:'Liberation Sans',sans-serif;font-size:7.5px;line-height:9.0px;font-weight:normal;font-style:italic;color:#8e9c8c;transform:scaleX(1.081);">Target is WM Input Manager Base</div><div class="a t " style="left:469.4px;top:836.90px;font-family:'Liberation Sans',sans-serif;font-size:7.5px;line-height:9.0px;font-weight:normal;font-style:normal;color:#dcdcdc;transform:scaleX(1.103);">Target</div><div class="a t " style="left:469.4px;top:856.90px;font-family:'Liberation Sans',sans-serif;font-size:7.5px;line-height:9.0px;font-weight:normal;font-style:normal;color:#dcdcdc;transform:scaleX(1.130);">Input Mapping Context</div><div class="a" style="left:473.9px;top:866.3px;width:54.6px;height:15.5px;background:#2a2c2a;border-radius:2px"></div><div class="a t " style="left:476.0px;top:870.82px;font-family:'Liberation Sans',sans-serif;font-size:6px;line-height:7.2px;font-weight:normal;font-style:normal;color:#999;transform:scaleX(1.140);">IMC_Default</div><div class="a nd" style="left:684.6px;top:793.0px;width:231.0px;height:95.0px;border:1px solid #0c0c0c;"><div class="a nh" style="left:0;top:0;right:0;height:14.5px;background:linear-gradient(to bottom,rgba(255,255,255,.10),rgba(0,0,0,.18) 75%,rgba(0,0,0,0)),linear-gradient(to right,#5a82a0 0%,#45667e 35%,#2e4050 75%,#2a3238 100%)"></div></div><div class="a" style="left:690.4px;top:795.3px;width:11.6px;height:10.7px;background:#c8d0d8;border:1px solid #e8e8e8"></div><div class="a" style="left:691.4px;top:797.3px;width:9.6px;height:7.7px;background:#9aa4ac"></div><div class="a t " style="left:704.0px;top:794.21px;font-family:'Liberation Sans',sans-serif;font-size:9.5px;line-height:11.4px;font-weight:bold;font-style:normal;color:#e6e6e6;transform:scaleX(0.903);">Create WM Input Manager Smart Menu Widget</div><div class="a t " style="left:707.0px;top:836.60px;font-family:'Liberation Sans',sans-serif;font-size:7.5px;line-height:9.0px;font-weight:normal;font-style:normal;color:#dcdcdc;transform:scaleX(1.013);">Class</div><div class="a" style="left:712.2px;top:846.6px;width:66.6px;height:14.5px;background:#2a2c2a;border-radius:2px"></div><div class="a t " style="left:714.5px;top:850.35px;font-family:'Liberation Sans',sans-serif;font-size:6.5px;line-height:7.8px;font-weight:normal;font-style:normal;color:#999;transform:scaleX(0.959);">WM Input Mana</div><div class="a t " style="left:707.0px;top:872.90px;font-family:'Liberation Sans',sans-serif;font-size:7.5px;line-height:9.0px;font-weight:normal;font-style:normal;color:#dcdcdc;transform:scaleX(1.056);">Owning Player</div><div class="a t " style="left:846.0px;top:836.60px;font-family:'Liberation Sans',sans-serif;font-size:7.5px;line-height:9.0px;font-weight:normal;font-style:normal;color:#dcdcdc;transform:scaleX(1.094);">Return Value</div><div class="a nd" style="left:943.4px;top:781.4px;width:121.4px;height:84.1px;border:1px solid #0c0c0c;"><div class="a nh" style="left:0;top:0;right:0;height:26.1px;background:linear-gradient(to bottom,rgba(255,255,255,.10),rgba(0,0,0,.18) 75%,rgba(0,0,0,0)),linear-gradient(to right,#5288b3 0%,#3f6d90 35%,#2c4658 75%,#2a3238 100%)"></div></div><svg class="a" style="left:949.5px;top:782.0px" width="12" height="14"><path d="M1.2 11.6Q3.6 12 4.3 8L5.2 4Q5.9 1.6 8.8 2.4M3.6 6.3H7.6" fill="none" stroke="#5cb0f0" stroke-width="1.3" stroke-linecap="round"/></svg><div class="a t " style="left:962.8px;top:784.01px;font-family:'Liberation Sans',sans-serif;font-size:9.5px;line-height:11.4px;font-weight:bold;font-style:normal;color:#e6e6e6;transform:scaleX(0.878);">Add to Viewport</div><div class="a t " style="left:962.8px;top:796.90px;font-family:'Liberation Sans',sans-serif;font-size:7.5px;line-height:9.0px;font-weight:normal;font-style:italic;color:#8e9c8c;transform:scaleX(1.078);">Target is User Widget</div><div class="a t " style="left:966.3px;top:836.60px;font-family:'Liberation Sans',sans-serif;font-size:7.5px;line-height:9.0px;font-weight:normal;font-style:normal;color:#dcdcdc;transform:scaleX(1.113);">Target</div><div class="a" style="left:908.3px;top:782.9px;width:15px;height:12px;background:#111;border:1.5px solid #eee;border-radius:2px"></div><div class="a" style="left:913.8px;top:794.9px;width:4px;height:3px;background:#eee"></div><div class="a" style="left:911.3px;top:797.9px;width:9px;height:2px;background:#eee"></div><div class="a" style="left:1056.6px;top:772.1px;width:15px;height:12px;background:#111;border:1.5px solid #eee;border-radius:2px"></div><div class="a" style="left:1062.1px;top:784.1px;width:4px;height:3px;background:#eee"></div><div class="a" style="left:1059.6px;top:787.1px;width:9px;height:2px;background:#eee"></div><div class="a nd" style="left:1657.4px;top:779.3px;width:147.4px;height:72.5px;border:1px solid #0c0c0c;"><div class="a nh" style="left:0;top:0;right:0;height:26.9px;background:linear-gradient(to bottom,rgba(255,255,255,.10),rgba(0,0,0,.18) 75%,rgba(0,0,0,0)),linear-gradient(to right,#5288b3 0%,#3f6d90 35%,#2c4658 75%,#2a3238 100%)"></div></div><svg class="a" style="left:1663.5px;top:780.0px" width="12" height="14"><path d="M1.2 11.6Q3.6 12 4.3 8L5.2 4Q5.9 1.6 8.8 2.4M3.6 6.3H7.6" fill="none" stroke="#5cb0f0" stroke-width="1.3" stroke-linecap="round"/></svg><div class="a t " style="left:1677.4px;top:782.01px;font-family:'Liberation Sans',sans-serif;font-size:9.5px;line-height:11.4px;font-weight:bold;font-style:normal;color:#e6e6e6;transform:scaleX(0.867);">Begin UMG</div><div class="a t " style="left:1677.4px;top:795.20px;font-family:'Liberation Sans',sans-serif;font-size:7.5px;line-height:9.0px;font-weight:normal;font-style:italic;color:#8e9c8c;transform:scaleX(1.096);">Target is WM Input Manager</div><div class="a t " style="left:1680.4px;top:834.80px;font-family:'Liberation Sans',sans-serif;font-size:7.5px;line-height:9.0px;font-weight:normal;font-style:normal;color:#dcdcdc;transform:scaleX(1.123);">Target</div><svg class="a" style="left:0;top:0" width="1919" height="1035"><path d="M315.0 255.1H318.6L322.8 259.5L318.6 263.9H315.0Z" fill="none" stroke="#e8e8e8" stroke-width="1.2" stroke-linejoin="round"/><path d="M483.0 255.1H486.6L490.8 259.5L486.6 263.9H483.0Z" fill="none" stroke="#e8e8e8" stroke-width="1.2" stroke-linejoin="round"/><circle cx="319.1" cy="286.5" r="3.1" fill="#111" stroke="#f000d8" stroke-width="1.5"/><path d="M323.0 284.5L325.1 286.5L323.0 288.5Z" fill="#f000d8"/><path d="M314.1 497.2H317.7L321.9 501.6L317.7 506.0H314.1Z" fill="#fff" stroke="#fff" stroke-width="1" stroke-linejoin="round"/><path d="M486.6 497.2H490.2L494.4 501.6L490.2 506.0H486.6Z" fill="#fff" stroke="#fff" stroke-width="1" stroke-linejoin="round"/><circle cx="318.0" cy="524.5" r="3.1" fill="#111" stroke="#1fd0a8" stroke-width="1.5"/><path d="M321.9 522.5L324.0 524.5L321.9 526.5Z" fill="#1fd0a8"/><circle cx="488.9" cy="521.9" r="3.1" fill="#111" stroke="#0aa8f0" stroke-width="1.5"/><path d="M492.8 519.9L494.9 521.9L492.8 523.9Z" fill="#0aa8f0"/><circle cx="318.5" cy="552.4" r="3.1" fill="#111" stroke="#9a0a0a" stroke-width="1.5"/><path d="M322.4 550.4L324.5 552.4L322.4 554.4Z" fill="#9a0a0a"/><path d="M334.3 557.2L336.6 559.6L340.6 553.8" fill="none" stroke="#1e90ff" stroke-width="1.5"/><path d="M402.2 578.5L405.2 575.5L408.2 578.5" fill="none" stroke="#ddd" stroke-width="1.2"/><path d="M530.5 497.2H534.1L538.3 501.6L534.1 506.0H530.5Z" fill="#fff" stroke="#fff" stroke-width="1" stroke-linejoin="round"/><path d="M676.5 497.2H680.1L684.3 501.6L680.1 506.0H676.5Z" fill="#fff" stroke="#fff" stroke-width="1" stroke-linejoin="round"/><circle cx="534.4" cy="524.5" r="3.1" fill="#111" stroke="#1fd0a8" stroke-width="1.5"/><path d="M538.3 522.5L540.4 524.5L538.3 526.5Z" fill="#1fd0a8"/><circle cx="678.8" cy="521.9" r="3.1" fill="#111" stroke="#0aa8f0" stroke-width="1.5"/><path d="M682.7 519.9L684.8 521.9L682.7 523.9Z" fill="#0aa8f0"/><path d="M604.8 543.0L607.8 546.0L610.8 543.0" fill="none" stroke="#ddd" stroke-width="1.2"/><path d="M713.6 497.2H717.2L721.4 501.6L717.2 506.0H713.6Z" fill="#fff" stroke="#fff" stroke-width="1" stroke-linejoin="round"/><path d="M860.8 497.2H864.4L868.6 501.6L864.4 506.0H860.8Z" fill="#fff" stroke="#fff" stroke-width="1" stroke-linejoin="round"/><circle cx="717.5" cy="524.5" r="3.1" fill="#111" stroke="#1fd0a8" stroke-width="1.5"/><path d="M721.4 522.5L723.5 524.5L721.4 526.5Z" fill="#1fd0a8"/><circle cx="863.1" cy="521.9" r="3.1" fill="#111" stroke="#0aa8f0" stroke-width="1.5"/><path d="M867.0 519.9L869.1 521.9L867.0 523.9Z" fill="#0aa8f0"/><path d="M788.5 543.0L791.5 546.0L794.5 543.0" fill="none" stroke="#ddd" stroke-width="1.2"/><path d="M897.7 497.2H901.3L905.5 501.6L901.3 506.0H897.7Z" fill="#fff" stroke="#fff" stroke-width="1" stroke-linejoin="round"/><path d="M1044.0 497.2H1047.6L1051.8 501.6L1047.6 506.0H1044.0Z" fill="none" stroke="#e8e8e8" stroke-width="1.2" stroke-linejoin="round"/><circle cx="901.6" cy="524.5" r="3.1" fill="#111" stroke="#1fd0a8" stroke-width="1.5"/><path d="M905.5 522.5L907.6 524.5L905.5 526.5Z" fill="#1fd0a8"/><circle cx="1046.3" cy="521.9" r="3.1" fill="#111" stroke="#0aa8f0" stroke-width="1.5"/><path d="M1050.2 519.9L1052.3 521.9L1050.2 523.9Z" fill="#0aa8f0"/><path d="M972.1 543.0L975.1 546.0L978.1 543.0" fill="none" stroke="#ddd" stroke-width="1.2"/><path d="M1235.5 450.5L1240 455L1235.5 459.5L1231 455Z" fill="none" stroke="#fff" stroke-width="1.6"/><path d="M1292.0 472.6H1295.6L1299.8 477.0L1295.6 481.4H1292.0Z" fill="none" stroke="#e8e8e8" stroke-width="1.2" stroke-linejoin="round"/><circle cx="1294.0" cy="497.3" r="3.1" fill="#111" stroke="#8cf020" stroke-width="1.5"/><path d="M1297.9 495.3L1300.0 497.3L1297.9 499.3Z" fill="#8cf020"/><circle cx="1518.0" cy="484.7" r="3.6" fill="#0aa8f0"/><path d="M1521.9 482.7L1524.0 484.7L1521.9 486.7Z" fill="#0aa8f0"/><circle cx="415.8" cy="894.6" r="3.6" fill="#0aa8f0"/><path d="M419.7 892.6L421.8 894.6L419.7 896.6Z" fill="#0aa8f0"/><circle cx="1314.2" cy="907.3" r="3.6" fill="#0aa8f0"/><path d="M1318.1 905.3L1320.2 907.3L1318.1 909.3Z" fill="#0aa8f0"/><circle cx="1700.9" cy="894.3" r="3.6" fill="#0aa8f0"/><path d="M1704.8 892.3L1706.9 894.3L1704.8 896.3Z" fill="#0aa8f0"/><path d="M1557.1 470.8H1560.7L1564.9 475.2L1560.7 479.6H1557.1Z" fill="none" stroke="#e8e8e8" stroke-width="1.2" stroke-linejoin="round"/><path d="M1696.4 470.8H1700.0L1704.2 475.2L1700.0 479.6H1696.4Z" fill="none" stroke="#e8e8e8" stroke-width="1.2" stroke-linejoin="round"/><circle cx="1561.0" cy="496.2" r="3.6" fill="#0aa8f0"/><path d="M1564.9 494.2L1567.0 496.2L1564.9 498.2Z" fill="#0aa8f0"/><circle cx="1561.0" cy="518.2" r="3.1" fill="#111" stroke="#1fd0a8" stroke-width="1.5"/><path d="M1564.9 516.2L1567.0 518.2L1564.9 520.2Z" fill="#1fd0a8"/><path d="M1344.6 817.3H1348.2L1352.4 821.7L1348.2 826.1H1344.6Z" fill="#fff" stroke="#fff" stroke-width="1" stroke-linejoin="round"/><path d="M1483.0 817.3H1486.6L1490.8 821.7L1486.6 826.1H1483.0Z" fill="#fff" stroke="#fff" stroke-width="1" stroke-linejoin="round"/><circle cx="1348.5" cy="842.7" r="3.6" fill="#0aa8f0"/><path d="M1352.4 840.7L1354.5 842.7L1352.4 844.7Z" fill="#0aa8f0"/><circle cx="1348.5" cy="864.6" r="3.1" fill="#111" stroke="#1fd0a8" stroke-width="1.5"/><path d="M1352.4 862.6L1354.5 864.6L1352.4 866.6Z" fill="#1fd0a8"/><path d="M8 766.5L10 768.5L8 770.5" fill="none" stroke="#ccc" stroke-width="1"/><path d="M85.0 785.6H88.6L92.8 790.0L88.6 794.4H85.0Z" fill="#fff" stroke="#fff" stroke-width="1" stroke-linejoin="round"/><path d="M130 766.5H139M130 770.5H136M130 774H139M131 766.5V774M137 766.5V769" fill="none" stroke="#ddd" stroke-width="1.2"/><path d="M132.4 784.2H136.0L140.2 788.6L136.0 793.0H132.4Z" fill="#fff" stroke="#fff" stroke-width="1" stroke-linejoin="round"/><path d="M198.8 784.2H202.4L206.6 788.6L202.4 793.0H198.8Z" fill="none" stroke="#e8e8e8" stroke-width="1.2" stroke-linejoin="round"/><path d="M198.8 804.8H202.4L206.6 809.2L202.4 813.6H198.8Z" fill="#fff" stroke="#fff" stroke-width="1" stroke-linejoin="round"/><path d="M198.8 826.8H202.4L206.6 831.2L202.4 835.6H198.8Z" fill="#fff" stroke="#fff" stroke-width="1" stroke-linejoin="round"/><circle cx="202.9" cy="856.7" r="4.2" fill="none" stroke="#ddd" stroke-width="1.2"/><path d="M200.6 856.7H205.2M202.9 854.4V859" stroke="#ddd" stroke-width="1.2"/><path d="M455.6 816.6H459.2L463.4 821.0L459.2 825.4H455.6Z" fill="#fff" stroke="#fff" stroke-width="1" stroke-linejoin="round"/><path d="M596.0 816.6H599.6L603.8 821.0L599.6 825.4H596.0Z" fill="#fff" stroke="#fff" stroke-width="1" stroke-linejoin="round"/><circle cx="459.8" cy="841.6" r="3.6" fill="#0aa8f0"/><path d="M463.7 839.6L465.8 841.6L463.7 843.6Z" fill="#0aa8f0"/><circle cx="459.8" cy="869.0" r="3.1" fill="#111" stroke="#0aa8f0" stroke-width="1.5"/><path d="M463.7 867.0L465.8 869.0L463.7 871.0Z" fill="#0aa8f0"/><path d="M518.0 873.0L521.0 876.0L524.0 873.0" fill="none" stroke="#ddd" stroke-width="1.2"/><circle cx="536.4" cy="874" r="3.5" fill="none" stroke="#555" stroke-width="1"/><circle cx="548.5" cy="873" r="2.8" fill="none" stroke="#555" stroke-width="1"/><path d="M550.5 875L552.5 877" stroke="#555" stroke-width="1"/><path d="M693.0 816.1H696.6L700.8 820.5L696.6 824.9H693.0Z" fill="#fff" stroke="#fff" stroke-width="1" stroke-linejoin="round"/><path d="M898.0 816.1H901.6L905.8 820.5L901.6 824.9H898.0Z" fill="#fff" stroke="#fff" stroke-width="1" stroke-linejoin="round"/><circle cx="697.7" cy="849.5" r="3.1" fill="#111" stroke="#5a10b0" stroke-width="1.5"/><path d="M701.6 847.5L703.7 849.5L701.6 851.5Z" fill="#5a10b0"/><path d="M768.5 853.0L771.5 856.0L774.5 853.0" fill="none" stroke="#ddd" stroke-width="1.2"/><circle cx="787.5" cy="853.8" r="3.5" fill="none" stroke="#555" stroke-width="1"/><circle cx="799.5" cy="853" r="2.8" fill="none" stroke="#555" stroke-width="1"/><path d="M801.5 855L803.5 857" stroke="#555" stroke-width="1"/><circle cx="697.1" cy="877.6" r="3.1" fill="#111" stroke="#0aa8f0" stroke-width="1.5"/><path d="M701.0 875.6L703.1 877.6L701.0 879.6Z" fill="#0aa8f0"/><circle cx="900.5" cy="841.4" r="3.6" fill="#0aa8f0"/><path d="M904.4 839.4L906.5 841.4L904.4 843.4Z" fill="#0aa8f0"/><path d="M953.0 816.7H956.6L960.8 821.1L956.6 825.5H953.0Z" fill="#fff" stroke="#fff" stroke-width="1" stroke-linejoin="round"/><path d="M1048.3 816.7H1051.9L1056.1 821.1L1051.9 825.5H1048.3Z" fill="#fff" stroke="#fff" stroke-width="1" stroke-linejoin="round"/><circle cx="957.0" cy="841.4" r="3.6" fill="#0aa8f0"/><path d="M960.9 839.4L963.0 841.4L960.9 843.4Z" fill="#0aa8f0"/><path d="M1001.2 857.3L1004.2 860.3L1007.2 857.3" fill="none" stroke="#ddd" stroke-width="1.2"/><path d="M907.3 785.9L904.3 790.9L907.3 790.9L905.3 795.9" fill="none" stroke="#eee" stroke-width="1"/><path d="M1055.6 775.1L1052.6 780.1L1055.6 780.1L1053.6 785.1" fill="none" stroke="#eee" stroke-width="1"/><path d="M1666.4 814.4H1670.0L1674.2 818.8L1670.0 823.2H1666.4Z" fill="#fff" stroke="#fff" stroke-width="1" stroke-linejoin="round"/><path d="M1787.0 814.4H1790.6L1794.8 818.8L1790.6 823.2H1787.0Z" fill="none" stroke="#e8e8e8" stroke-width="1.2" stroke-linejoin="round"/><circle cx="1670.2" cy="839.2" r="3.6" fill="#0aa8f0"/><path d="M1674.1 837.2L1676.2 839.2L1674.1 841.2Z" fill="#0aa8f0"/></svg><div class="a t " style="left:1577.0px;top:905.22px;font-family:'Liberation Sans',sans-serif;font-size:64px;line-height:76.8px;font-weight:bold;font-style:normal;color:#fff;transform:scaleX(0.778);-webkit-text-stroke:2.5px #fff;opacity:.17">BLUEPRINT</div>
</div></div>
<div class="a" style="left:8px;top:127px;width:1867px;height:37.5px;background:rgba(8,8,8,.72)"></div>
<div class="a" style="left:55px;top:131px;width:2px;height:30px;background:#1c1c1c"></div>
<div class="a" style="left:133px;top:131px;width:2px;height:30px;background:#1c1c1c"></div>
<div class="a t " style="left:184.2px;top:133.96px;font-family:'Liberation Sans',sans-serif;font-size:18px;line-height:21.6px;font-weight:normal;font-style:normal;color:#a0a0a0;transform:scaleX(1.031);">WM_GameMode</div>
<div class="a t " style="left:351.7px;top:133.96px;font-family:'Liberation Sans',sans-serif;font-size:18px;line-height:21.6px;font-weight:normal;font-style:normal;color:#999;transform:scaleX(1.013);">Event Graph</div>
<div class="a t " style="left:1800.5px;top:131.78px;font-family:'Liberation Sans',sans-serif;font-size:22px;line-height:26.4px;font-weight:bold;font-style:normal;color:#373737;transform:scaleX(0.801);-webkit-text-stroke:0.7px #373737">Zoom -3</div>
<svg class="a" style="left:0;top:127px" width="500" height="38">
<path d="M17 9H23V26L20 23L17 26Z" fill="#777"/><path d="M19 11H26V29L22.5 25.5L19 29Z" fill="#ccc"/><path d="M36 17L40 21L44 17" stroke="#ccc" fill="none" stroke-width="1.4"/>
<path d="M64.5 18L72 11V15.5H83V20.5H72V25Z" fill="#fff"/>
<path d="M122.5 18L115 11V15.5H104V20.5H115V25Z" fill="#888"/>
<rect x="147" y="8" width="9" height="8" rx="1.5" fill="#ccc"/><rect x="162" y="13" width="6" height="5" rx="1" fill="#ccc"/><rect x="149" y="23" width="6" height="5" rx="1" fill="#ccc"/><rect x="162" y="23" width="6" height="5" rx="1" fill="#ccc"/><path d="M151.5 16V23M153 15L163 25M155 15.5H162" stroke="#ccc" stroke-width="1.5"/>
<path d="M335.5 12L341.5 18L335.5 24" stroke="#bbb" fill="none" stroke-width="1.6"/>
</svg>
<div class="a" style="left:1875px;top:127px;width:9px;height:865px;background:#1a1a1a"></div><div class="a" style="left:1884px;top:0;width:1.5px;height:1035px;background:#2a2a2a"></div><div class="a" style="left:1886.5px;top:55px;width:33px;height:40px;background:#242424"></div><svg class="a" style="left:1885px;top:55px" width="34" height="40"><path d="M5 17L9 21L13 17" stroke="#ccc" fill="none" stroke-width="1.4"/></svg><div class="a" style="left:1887px;top:124px;width:28px;height:38px;background:#262626"></div><svg class="a" style="left:1885px;top:124px" width="34" height="38"><circle cx="12.5" cy="18" r="5.5" fill="none" stroke="#ddd" stroke-width="2.6" stroke-dasharray="2.3 1.6"/><circle cx="12.5" cy="18" r="3.8" fill="none" stroke="#ddd" stroke-width="1.2"/><circle cx="12.5" cy="18" r="1.4" fill="#ddd"/></svg><div class="a" style="left:1887px;top:162px;width:13px;height:24px;background:#333"></div><div class="a" style="left:1902.5px;top:190px;width:8.5px;height:48px;background:#5a5a5a;border-radius:4px"></div><div class="a" style="left:1886px;top:225px;width:16px;height:100px;overflow:hidden"><div class="a" style="left:-1887px;top:-225px;width:1919px;height:1035px"><div class="a t " style="left:1883.5px;top:232.51px;font-family:'Liberation Sans',sans-serif;font-size:9.5px;line-height:11.4px;font-weight:normal;font-style:normal;color:#d0d0d0;transform:scaleX(1.239);">Act</div><div class="a t " style="left:1883.5px;top:252.51px;font-family:'Liberation Sans',sans-serif;font-size:9.5px;line-height:11.4px;font-weight:normal;font-style:normal;color:#d0d0d0;transform:scaleX(1.239);">Act</div><div class="a t " style="left:1883.5px;top:272.51px;font-family:'Liberation Sans',sans-serif;font-size:9.5px;line-height:11.4px;font-weight:normal;font-style:normal;color:#d0d0d0;transform:scaleX(1.239);">Act</div><div class="a t " style="left:1883.5px;top:292.51px;font-family:'Liberation Sans',sans-serif;font-size:9.5px;line-height:11.4px;font-weight:normal;font-style:normal;color:#d0d0d0;transform:scaleX(1.239);">Act</div><div class="a t " style="left:1883.5px;top:312.51px;font-family:'Liberation Sans',sans-serif;font-size:9.5px;line-height:11.4px;font-weight:normal;font-style:normal;color:#d0d0d0;transform:scaleX(1.239);">Act</div></div></div><div class="a" style="left:1887px;top:321.5px;width:28px;height:33px;background:#333"></div><div class="a" style="left:1887px;top:385px;width:28px;height:620px;background:#222"></div><div class="a" style="left:1887px;top:1007px;width:28px;height:28px;background:#242424"></div><div class="a t " style="left:1886.0px;top:1015.64px;font-family:'Liberation Sans',sans-serif;font-size:12px;line-height:14.4px;font-weight:normal;font-style:normal;color:#d0d0d0;transform:scaleX(1.275);">rol</div>
<div class="a" style="left:0;top:1021.7px;width:1884px;height:14px;background:#242424"></div><div class="a" style="left:0;top:1002px;width:238px;height:33px;background:#242424"></div><div class="a" style="left:167.5px;top:1002px;width:70.5px;height:19.7px;background:#151515"></div><div class="a" style="left:8px;top:997.5px;width:159.5px;height:30px;background:#242424;border-radius:4px 4px 0 0"></div><div class="a" style="left:238px;top:1006.7px;width:362px;height:28.3px;background:#242424"></div><div class="a" style="left:326px;top:1008px;width:267px;height:20px;background:#0f0f0f;border:1px solid #333;border-radius:3px"></div><div class="a" style="left:130.5px;top:1022px;width:1.2px;height:13px;background:#151515"></div><div class="a" style="left:233.5px;top:1022px;width:1.2px;height:13px;background:#151515"></div><div class="a" style="left:602px;top:1022px;width:1.2px;height:13px;background:#151515"></div><div class="a t " style="left:35.3px;top:1000.20px;font-family:'Liberation Sans',sans-serif;font-size:13px;line-height:15.6px;font-weight:normal;font-style:normal;color:#cfcfcf;transform:scaleX(0.967);">Compiler Results</div><div class="a t " style="left:30.3px;top:1010.20px;font-family:'Liberation Sans',sans-serif;font-size:13px;line-height:15.6px;font-weight:normal;font-style:normal;color:#cfcfcf;transform:scaleX(0.971);">Content Drawer</div><div class="a t " style="left:162.5px;top:1010.20px;font-family:'Liberation Sans',sans-serif;font-size:13px;line-height:15.6px;font-weight:normal;font-style:normal;color:#cfcfcf;transform:scaleX(0.945);">Output Log</div><div class="a t " style="left:270.3px;top:1010.20px;font-family:'Liberation Sans',sans-serif;font-size:13px;line-height:15.6px;font-weight:normal;font-style:normal;color:#cfcfcf;transform:scaleX(0.911);">Cmd</div><div class="a t " style="left:335.0px;top:1010.14px;font-family:'Liberation Mono',monospace;font-size:12px;line-height:14.4px;font-weight:normal;font-style:normal;color:#6a6a6a;transform:scaleX(0.939);">Enter Console Command</div><div class="a t " style="left:1683.3px;top:1010.50px;font-family:'Liberation Sans',sans-serif;font-size:13px;line-height:15.6px;font-weight:normal;font-style:normal;color:#cfcfcf;transform:scaleX(0.977);">3 Unsaved</div><div class="a t " style="left:1781.8px;top:1010.50px;font-family:'Liberation Sans',sans-serif;font-size:13px;line-height:15.6px;font-weight:normal;font-style:normal;color:#cfcfcf;transform:scaleX(0.966);">Source Control</div><svg class="a" style="left:0;top:990px" width="1884" height="45"><path d="M147 16L153 22M153 16L147 22" stroke="#ddd" stroke-width="1.5"/><rect x="15" y="12" width="11" height="14" fill="#ccc"/><rect x="16" y="10.5" width="2" height="2" fill="#ccc"/><rect x="23" y="10.5" width="2" height="2" fill="#ccc"/><path d="M17.5 18L20 20L17.5 22M21 23H24" stroke="#242424" fill="none" stroke-width="1.2"/><path d="M144 31H156V36H144Z" fill="#ccc"/><rect x="147" y="31" width="6" height="2" fill="#242424"/><path d="M10 33H17M19 33Q22 30 25 33" stroke="#ccc" fill="none" stroke-width="1.5"/><rect x="250.5" y="23" width="15" height="12" fill="none" stroke="#ccc" stroke-width="1.3"/><path d="M253.5 26.5L256.5 28.5L253.5 30.5M257.5 31.5H261.5" stroke="#ccc" fill="none" stroke-width="1.2"/><path d="M303 26.5L307 30.5L311 26.5" stroke="#ccc" fill="none" stroke-width="1.4"/><path d="M1661 21H1674L1676 23V36H1661Z" fill="#aaa"/><rect x="1664.5" y="21" width="6" height="4.5" fill="#242424"/><rect x="1664" y="29" width="8" height="4" fill="#242424"/><path d="M1673 30L1680 36M1680 30L1673 36M1672 33H1681M1676.5 29V37" stroke="#ccc" stroke-width="1.5"/><circle cx="1767.8" cy="27.5" r="6.5" fill="none" stroke="#ccc" stroke-width="1.5"/><path d="M1763.5 31.5L1772 23.5" stroke="#ccc" stroke-width="1.5"/></svg>
</body></html>
